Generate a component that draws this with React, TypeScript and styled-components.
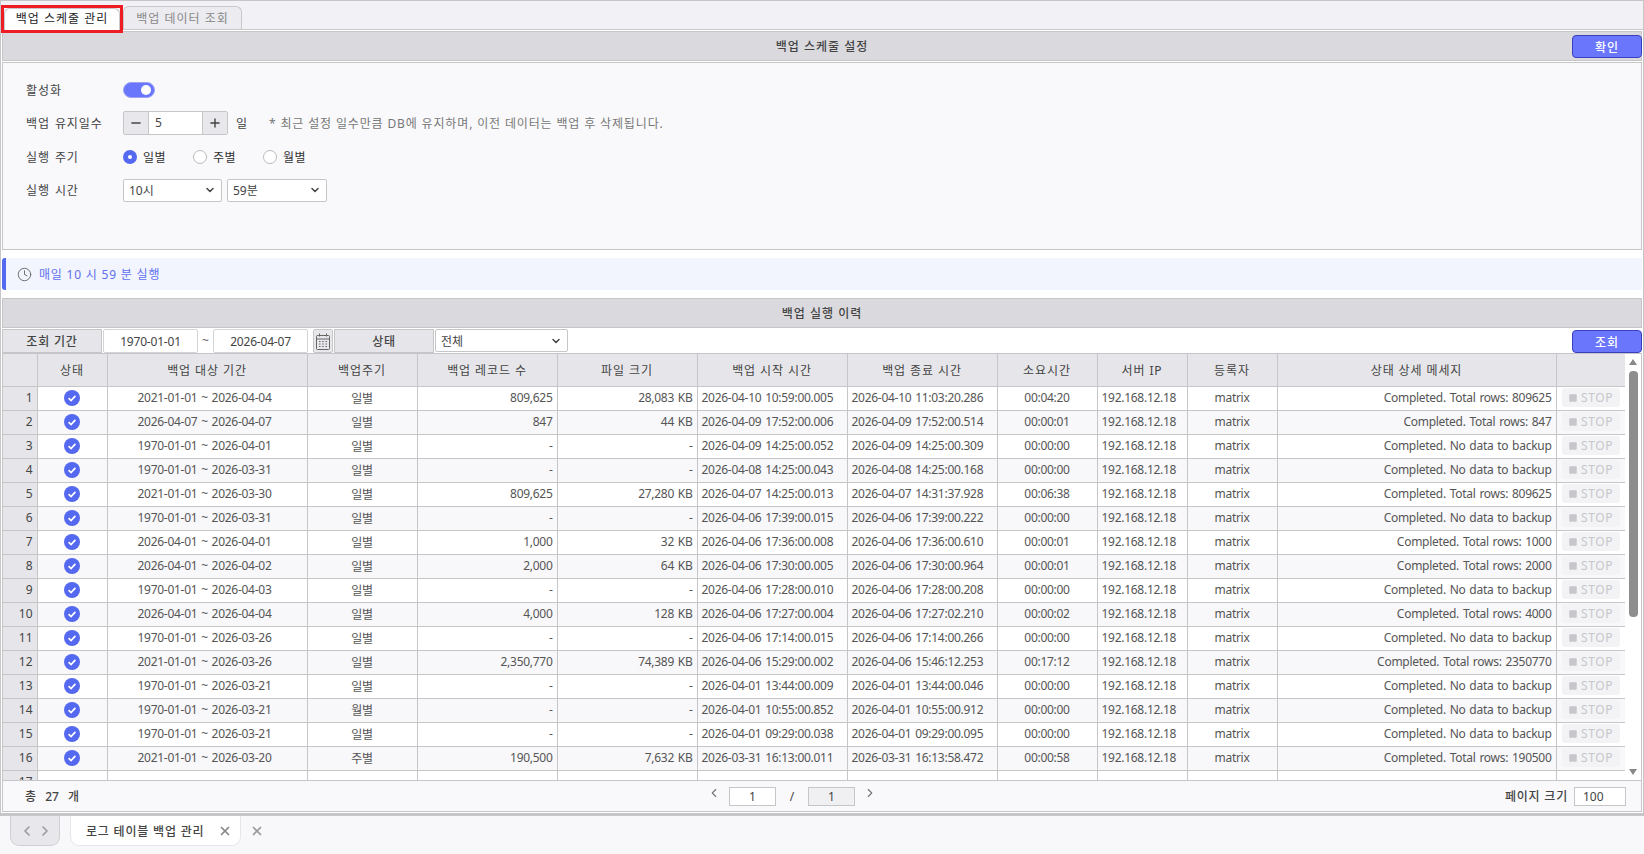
import styled, { createGlobalStyle } from 'styled-components';
import { ChevronDown, ChevronLeft, ChevronRight, X, Minus, Plus, Clock, Square } from 'lucide-react';

const GlobalStyle = createGlobalStyle`
  html, body {
    margin: 0;
    padding: 0;
    background: #f8f8fa;
    font-family: "Noto Sans", "Noto Sans CJK KR", sans-serif;
    font-size: 12px;
    color: #444;
    overflow: hidden;
  }
  *, *::before, *::after {
    box-sizing: border-box;
  }
`;

type Row = {
  range: string;
  cycle: string;
  records: string;
  size: string;
  start: string;
  end: string;
  elapsed: string;
  message: string;
};

const NO_DATA = 'Completed. No data to backup';
const total = (n: number) => `Completed. Total rows: ${n}`;

const rows: Row[] = [
  { range: '2021-01-01 ~ 2026-04-04', cycle: '일별', records: '809,625', size: '28,083 KB', start: '2026-04-10 10:59:00.005', end: '2026-04-10 11:03:20.286', elapsed: '00:04:20', message: total(809625) },
  { range: '2026-04-07 ~ 2026-04-07', cycle: '일별', records: '847', size: '44 KB', start: '2026-04-09 17:52:00.006', end: '2026-04-09 17:52:00.514', elapsed: '00:00:01', message: total(847) },
  { range: '1970-01-01 ~ 2026-04-01', cycle: '일별', records: '-', size: '-', start: '2026-04-09 14:25:00.052', end: '2026-04-09 14:25:00.309', elapsed: '00:00:00', message: NO_DATA },
  { range: '1970-01-01 ~ 2026-03-31', cycle: '일별', records: '-', size: '-', start: '2026-04-08 14:25:00.043', end: '2026-04-08 14:25:00.168', elapsed: '00:00:00', message: NO_DATA },
  { range: '2021-01-01 ~ 2026-03-30', cycle: '일별', records: '809,625', size: '27,280 KB', start: '2026-04-07 14:25:00.013', end: '2026-04-07 14:31:37.928', elapsed: '00:06:38', message: total(809625) },
  { range: '1970-01-01 ~ 2026-03-31', cycle: '일별', records: '-', size: '-', start: '2026-04-06 17:39:00.015', end: '2026-04-06 17:39:00.222', elapsed: '00:00:00', message: NO_DATA },
  { range: '2026-04-01 ~ 2026-04-01', cycle: '일별', records: '1,000', size: '32 KB', start: '2026-04-06 17:36:00.008', end: '2026-04-06 17:36:00.610', elapsed: '00:00:01', message: total(1000) },
  { range: '2026-04-01 ~ 2026-04-02', cycle: '일별', records: '2,000', size: '64 KB', start: '2026-04-06 17:30:00.005', end: '2026-04-06 17:30:00.964', elapsed: '00:00:01', message: total(2000) },
  { range: '1970-01-01 ~ 2026-04-03', cycle: '일별', records: '-', size: '-', start: '2026-04-06 17:28:00.010', end: '2026-04-06 17:28:00.208', elapsed: '00:00:00', message: NO_DATA },
  { range: '2026-04-01 ~ 2026-04-04', cycle: '일별', records: '4,000', size: '128 KB', start: '2026-04-06 17:27:00.004', end: '2026-04-06 17:27:02.210', elapsed: '00:00:02', message: total(4000) },
  { range: '1970-01-01 ~ 2026-03-26', cycle: '일별', records: '-', size: '-', start: '2026-04-06 17:14:00.015', end: '2026-04-06 17:14:00.266', elapsed: '00:00:00', message: NO_DATA },
  { range: '2021-01-01 ~ 2026-03-26', cycle: '일별', records: '2,350,770', size: '74,389 KB', start: '2026-04-06 15:29:00.002', end: '2026-04-06 15:46:12.253', elapsed: '00:17:12', message: total(2350770) },
  { range: '1970-01-01 ~ 2026-03-21', cycle: '일별', records: '-', size: '-', start: '2026-04-01 13:44:00.009', end: '2026-04-01 13:44:00.046', elapsed: '00:00:00', message: NO_DATA },
  { range: '1970-01-01 ~ 2026-03-21', cycle: '월별', records: '-', size: '-', start: '2026-04-01 10:55:00.852', end: '2026-04-01 10:55:00.912', elapsed: '00:00:00', message: NO_DATA },
  { range: '1970-01-01 ~ 2026-03-21', cycle: '일별', records: '-', size: '-', start: '2026-04-01 09:29:00.038', end: '2026-04-01 09:29:00.095', elapsed: '00:00:00', message: NO_DATA },
  { range: '2021-01-01 ~ 2026-03-20', cycle: '주별', records: '190,500', size: '7,632 KB', start: '2026-03-31 16:13:00.011', end: '2026-03-31 16:13:58.472', elapsed: '00:00:58', message: total(190500) },
];

const columns = [
  { title: '', width: 34 },
  { title: '상태', width: 70 },
  { title: '백업 대상 기간', width: 200 },
  { title: '백업주기', width: 110 },
  { title: '백업 레코드 수', width: 140 },
  { title: '파일 크기', width: 140 },
  { title: '백업 시작 시간', width: 150 },
  { title: '백업 종료 시간', width: 150 },
  { title: '소요시간', width: 100 },
  { title: '서버 IP', width: 90 },
  { title: '등록자', width: 90 },
  { title: '상태 상세 메세지', width: 279 },
  { title: '', width: 69 },
];

function CheckBadge() {
  return (
    <svg width="16" height="16" viewBox="0 0 16 16">
      <circle cx="8" cy="8" r="8" fill="#5468f0" />
      <path d="M4.6 8.2 7 10.5 11.4 5.8" fill="none" stroke="#fff" strokeWidth="1.7" />
    </svg>
  );
}

function CalendarIcon() {
  return (
    <svg width="14" height="17" viewBox="0 0 14 17" fill="none" stroke="#666">
      <rect x="0.5" y="2.5" width="13" height="14" rx="1" />
      <path d="M0.5 6h13M3.5 0.5v3M10.5 0.5v3" />
      <path d="M3 8.5h1.5M6.2 8.5h1.5M9.5 8.5h1.5M3 11h1.5M6.2 11h1.5M9.5 11h1.5M3 13.5h1.5M6.2 13.5h1.5M9.5 13.5h1.5" />
    </svg>
  );
}

export default function App() {
  return (
    <Page>
      <GlobalStyle />
      <Frame>
        <TabStrip>
          <TopTab $active>백업 스케줄 관리</TopTab>
          <TopTab>백업 데이터 조회</TopTab>
        </TabStrip>

        <SectionBar>
          백업 스케줄 설정
          <BarButton>확인</BarButton>
        </SectionBar>

        <SettingsPanel>
          <FormRow>
            <FormLabel>활성화</FormLabel>
            <Toggle />
          </FormRow>
          <FormRow>
            <FormLabel>백업 유지일수</FormLabel>
            <Stepper>
              <StepButton><Minus size={14} strokeWidth={2.4} /></StepButton>
              <StepValue>5</StepValue>
              <StepButton><Plus size={14} strokeWidth={2.4} /></StepButton>
            </Stepper>
            <Unit>일</Unit>
            <Hint>* 최근 설정 일수만큼 DB에 유지하며, 이전 데이터는 백업 후 삭제됩니다.</Hint>
          </FormRow>
          <FormRow>
            <FormLabel>실행 주기</FormLabel>
            <RadioItem $checked>일별</RadioItem>
            <RadioItem>주별</RadioItem>
            <RadioItem>월별</RadioItem>
          </FormRow>
          <FormRow>
            <FormLabel>실행 시간</FormLabel>
            <SelectBox $width={99}>10시<ChevronDown size={12} strokeWidth={3} /></SelectBox>
            <SelectBox $width={100}>59분<ChevronDown size={12} strokeWidth={3} /></SelectBox>
          </FormRow>
        </SettingsPanel>

        <InfoBar>
          <Clock size={15} color="#666" strokeWidth={1.5} />
          매일 10 시 59 분 실행
        </InfoBar>

        <SectionBar>백업 실행 이력</SectionBar>

        <Toolbar>
          <ToolLabel $width={100}>조회 기간</ToolLabel>
          <DateField>1970-01-01</DateField>
          <Tilde>~</Tilde>
          <DateField>2026-04-07</DateField>
          <CalendarButton><CalendarIcon /></CalendarButton>
          <ToolLabel $width={100}>상태</ToolLabel>
          <SelectBox $width={133}>전체<ChevronDown size={12} strokeWidth={3} /></SelectBox>
          <SearchButton>조회</SearchButton>
        </Toolbar>

        <TableArea>
          <TableClip>
            <HistoryTable>
              <colgroup>
                {columns.map((c, i) => (
                  <col key={i} style={{ width: c.width }} />
                ))}
              </colgroup>
              <thead>
                <tr>
                  {columns.map((c, i) => (
                    <Th key={i}>{c.title}</Th>
                  ))}
                </tr>
              </thead>
              <tbody>
                {rows.map((r, i) => {
                  const even = i % 2 === 1;
                  return (
                    <tr key={i}>
                      <NumCell>{i + 1}</NumCell>
                      <Td $even={even}><BadgeWrap><CheckBadge /></BadgeWrap></Td>
                      <RangeCell $even={even}>{r.range}</RangeCell>
                      <Td $even={even}>{r.cycle}</Td>
                      <Td $even={even} $align="right">{r.records}</Td>
                      <Td $even={even} $align="right">{r.size}</Td>
                      <Td $even={even} $align="left">{r.start}</Td>
                      <Td $even={even} $align="left">{r.end}</Td>
                      <Td $even={even}>{r.elapsed}</Td>
                      <Td $even={even} $align="left">192.168.12.18</Td>
                      <Td $even={even}>matrix</Td>
                      <Td $even={even} $align="right">{r.message}</Td>
                      <Td $even={even}>
                        <StopButton><Square size={10} fill="#c6c6cb" stroke="none" />STOP</StopButton>
                      </Td>
                    </tr>
                  );
                })}
                <tr>
                  <NumCell>17</NumCell>
                  {columns.slice(1).map((_, i) => (
                    <Td key={i} />
                  ))}
                </tr>
              </tbody>
            </HistoryTable>
          </TableClip>
          <ScrollTrack>
            <ScrollArrow />
            <ScrollThumb />
            <ScrollArrow $down />
          </ScrollTrack>
        </TableArea>

        <Pager>
          <TotalCount>총 <b>27</b> 개</TotalCount>
          <PagerCenter>
            <PagerArrow><ChevronLeft size={14} /></PagerArrow>
            <PageBox>1</PageBox>
            <Slash>/</Slash>
            <PageBox $muted>1</PageBox>
            <PagerArrow><ChevronRight size={14} /></PagerArrow>
          </PagerCenter>
          <PageSize>
            페이지 크기
            <PageSizeBox>100</PageSizeBox>
          </PageSize>
        </Pager>
      </Frame>

      <BottomTabs>
        <NavPill>
          <ChevronLeft size={16} strokeWidth={2.4} />
          <ChevronRight size={16} strokeWidth={2.4} />
        </NavPill>
        <OpenTab>
          로그 테이블 백업 관리
          <X size={14} color="#888" strokeWidth={3} />
        </OpenTab>
        <CloseAll><X size={14} color="#999" strokeWidth={3} /></CloseAll>
      </BottomTabs>
    </Page>
  );
}

const Page = styled.div`
  width: 1644px;
  height: 854px;
  display: flex;
  flex-direction: column;
  overflow: hidden;
`;

const Frame = styled.div`
  height: 816px;
  display: flex;
  flex-direction: column;
  background: #fff;
  border: 1px solid #c6c6c8;
  border-bottom-width: 3px;
  padding: 0 1px 1px;
`;

const TabStrip = styled.div`
  height: 29px;
  flex: none;
  display: flex;
  align-items: flex-end;
  background: #f2f2f6;
  border-bottom: 1px solid #c8c8ca;
  margin: 0 -1px 1px;
`;

const TopTab = styled.div<{ $active?: boolean }>`
  height: ${(p) => (p.$active ? '28px' : '23px')};
  width: ${(p) => (p.$active ? '122px' : '119px')};
  margin-bottom: ${(p) => (p.$active ? '-4px' : '0')};
  padding-bottom: ${(p) => (p.$active ? '2px' : '0')};
  position: relative;
  z-index: 1;
  display: flex;
  align-items: center;
  justify-content: center;
  white-space: nowrap;
  letter-spacing: 1px;
  color: ${(p) => (p.$active ? '#222' : '#888')};
  background: ${(p) => (p.$active ? '#f2f2f6' : '#ececf0')};
  border: ${(p) => (p.$active ? '3px solid #ee1c25' : '1px solid #c8c8ca')};
  border-radius: ${(p) => (p.$active ? '0' : '6px 6px 0 0')};
  border-bottom-width: ${(p) => (p.$active ? '3px' : '0')};
  &::before {
    content: '';
    display: ${(p) => (p.$active ? 'block' : 'none')};
    position: absolute;
    inset: 0;
    z-index: -1;
    background: #fff;
    border: 1px solid #c8c8ca;
    border-bottom: 0;
    border-radius: 6px 6px 0 0;
  }
`;

const SectionBar = styled.div`
  height: 30px;
  flex: none;
  position: relative;
  display: flex;
  align-items: center;
  justify-content: center;
  background: #dadade;
  border: 1px solid #c6c6c8;
  font-weight: 500;
  color: #444;
  letter-spacing: 1px;
`;

const BarButton = styled.button`
  position: absolute;
  right: -1px;
  top: 3px;
  width: 70px;
  height: 23px;
  padding: 0;
  font: inherit;
  font-weight: 500;
  letter-spacing: 1px;
  color: #fff;
  background: #6a76fb;
  border: 1px solid #3a3fc0;
  border-radius: 4px;
`;

const SettingsPanel = styled.div`
  height: 188px;
  flex: none;
  margin-top: 1px;
  background: #f9f9fb;
  border: 1px solid #c6c6c8;
  padding: 10px 23px 0;
  display: flex;
  flex-direction: column;
`;

const FormRow = styled.div`
  height: 33.5px;
  display: flex;
  align-items: center;
`;

const FormLabel = styled.div`
  width: 97px;
  flex: none;
  color: #444;
  letter-spacing: 0.9px;
  word-spacing: 1px;
`;

const Toggle = styled.div`
  width: 32px;
  height: 16px;
  border-radius: 8px;
  background: #6a76fb;
  border: 1px solid #9ca3f5;
  position: relative;
  &::after {
    content: '';
    position: absolute;
    right: 3px;
    top: 2px;
    width: 10px;
    height: 10px;
    border-radius: 50%;
    background: #fff;
  }
`;

const Stepper = styled.div`
  width: 105px;
  height: 24px;
  display: flex;
  border: 1px solid #c6c6c8;
  border-radius: 2px;
  background: #fff;
  margin-right: 8px;
`;

const StepButton = styled.div`
  width: 24px;
  flex: none;
  display: flex;
  align-items: center;
  justify-content: center;
  background: #e8e8ec;
  color: #444;
`;

const StepValue = styled.div`
  flex: 1;
  padding-left: 6px;
  line-height: 22px;
  border-left: 1px solid #c6c6c8;
  border-right: 1px solid #c6c6c8;
`;

const Unit = styled.span`
  width: 33px;
  color: #444;
`;

const Hint = styled.span`
  color: #777;
  letter-spacing: 0.85px;
`;

const RadioItem = styled.label<{ $checked?: boolean }>`
  width: 70px;
  display: flex;
  align-items: center;
  gap: 6px;
  color: #333;
  letter-spacing: 0.5px;
  &::before {
    content: '';
    width: 14px;
    height: 14px;
    flex: none;
    border-radius: 50%;
    background: #fff;
    border: ${(p) => (p.$checked ? '5px solid #5468f0' : '1px solid #bbb')};
  }
`;

const SelectBox = styled.div<{ $width: number }>`
  width: ${(p) => p.$width}px;
  height: 23px;
  margin-right: 5px;
  flex: none;
  display: flex;
  align-items: center;
  justify-content: space-between;
  padding: 0 5px;
  color: #444;
  background: #fff;
  border: 1px solid #c6c6c8;
  border-radius: 2px;
`;

const InfoBar = styled.div`
  height: 32px;
  flex: none;
  margin: 8px 0;
  display: flex;
  align-items: center;
  gap: 7px;
  padding-left: 11px;
  background: #f2f5fe;
  border-left: 4px solid #5468f0;
  border-radius: 3px 0 0 3px;
  color: #5f6ff0;
  letter-spacing: 0.8px;
`;

const Toolbar = styled.div`
  height: 24px;
  flex: none;
  margin-top: 1px;
  position: relative;
  display: flex;
  align-items: stretch;
  gap: 1px;
`;

const ToolLabel = styled.div<{ $width: number }>`
  width: ${(p) => p.$width}px;
  flex: none;
  display: flex;
  align-items: center;
  justify-content: center;
  background: #e6e6ea;
  border: 1px solid #c6c6c8;
  font-weight: 500;
  letter-spacing: 0.8px;
  color: #444;
`;

const DateField = styled.div`
  width: 95px;
  flex: none;
  display: flex;
  align-items: center;
  justify-content: center;
  border: 1px solid #d4d4d6;
  border-radius: 2px;
  color: #444;
  letter-spacing: -0.2px;
`;

const Tilde = styled.span`
  width: 13px;
  flex: none;
  text-align: center;
  line-height: 24px;
  color: #666;
`;

const CalendarButton = styled.div`
  width: 20px;
  flex: none;
  margin-left: 4px;
  display: flex;
  align-items: center;
  justify-content: center;
  background: #e8e8ec;
  border: 1px solid #c6c6c8;
  border-radius: 2px;
`;

const SearchButton = styled(BarButton)`
  top: 1px;
  right: 0;
`;

const TableArea = styled.div`
  height: 428px;
  flex: none;
  position: relative;
  display: flex;
  border: 1px solid #c6c6c8;
`;

const TableClip = styled.div`
  flex: 1;
  overflow: hidden;
`;

const HistoryTable = styled.table`
  table-layout: fixed;
  border-collapse: collapse;
  width: 1622px;
`;

const Th = styled.th`
  height: 32px;
  padding: 0;
  font-weight: 400;
  background: #e6e6ea;
  border: 1px solid #c6c6c8;
  border-top: 0;
  color: #444;
  letter-spacing: 0.9px;
  &:first-child {
    border-left: 0;
  }
`;

const Td = styled.td<{ $even?: boolean; $align?: 'left' | 'right' }>`
  height: 24px;
  padding: 0 4px 1px;
  white-space: nowrap;
  overflow: hidden;
  text-align: ${(p) => p.$align ?? 'center'};
  background: ${(p) => (p.$even ? '#f8f8fb' : '#fff')};
  border: 1px solid #c6c6c8;
  color: #555;
  letter-spacing: -0.28px;
  word-spacing: 1px;
`;

const RangeCell = styled(Td)`
  padding-right: 9px;
`;

const NumCell = styled.td`
  height: 24px;
  padding: 0 4px 1px 0;
  text-align: right;
  background: #e6e6ea;
  border: 1px solid #c6c6c8;
  border-left: 0;
  color: #444;
`;

const BadgeWrap = styled.span`
  display: flex;
  justify-content: center;
`;

const StopButton = styled.div`
  width: 58px;
  height: 19px;
  margin: 0 auto;
  display: flex;
  align-items: center;
  justify-content: center;
  gap: 3px;
  background: #f3f3f6;
  border-radius: 3px;
  color: #c6c6cb;
  letter-spacing: 0.6px;
`;

const ScrollTrack = styled.div`
  width: 16px;
  flex: none;
  display: flex;
  flex-direction: column;
  align-items: center;
  background: #fff;
  padding: 5px 0;
`;

const ScrollArrow = styled.div<{ $down?: boolean }>`
  width: 0;
  height: 0;
  flex: none;
  border-left: 4px solid transparent;
  border-right: 4px solid transparent;
  border-bottom: ${(p) => (p.$down ? '0' : '6px solid #888')};
  border-top: ${(p) => (p.$down ? '6px solid #888' : '0')};
`;

const ScrollThumb = styled.div`
  width: 9px;
  height: 246px;
  margin: 6px 0 auto;
  background: #8e8e8e;
  border-radius: 4px;
`;

const Pager = styled.div`
  flex: 1;
  display: grid;
  grid-template-columns: 682px auto 1fr;
  align-items: center;
  background: #f9f9fb;
  border: 1px solid #c6c6c8;
  border-top: 0;
  padding: 0 15px 0 22px;
`;

const TotalCount = styled.div`
  font-weight: 500;
  color: #444;
  word-spacing: 6px;
  b {
    font-weight: 500;
  }
`;

const PagerCenter = styled.div`
  display: flex;
  align-items: center;
`;

const PagerArrow = styled.span`
  display: flex;
  color: #777;
  margin: -6px 8px 0;
  &:first-child {
    margin-left: 0;
  }
`;

const PageBox = styled.div<{ $muted?: boolean }>`
  width: 47px;
  height: 19px;
  line-height: 17px;
  text-align: center;
  background: ${(p) => (p.$muted ? '#f0f0f2' : '#fff')};
  border: 1px solid #c6c6c8;
  color: #444;
`;

const Slash = styled.span`
  width: 32px;
  text-align: center;
  color: #444;
`;

const PageSize = styled.div`
  justify-self: end;
  display: flex;
  align-items: center;
  gap: 6px;
  font-weight: 500;
  letter-spacing: 0.8px;
  color: #444;
`;

const PageSizeBox = styled.div`
  width: 52px;
  height: 19px;
  line-height: 17px;
  padding-left: 8px;
  font-weight: 400;
  letter-spacing: 0;
  background: #fff;
  border: 1px solid #c6c6c8;
`;

const BottomTabs = styled.div`
  flex: 1;
  display: flex;
  align-items: flex-start;
  padding-left: 10px;
`;

const NavPill = styled.div`
  width: 50px;
  height: 30px;
  display: flex;
  align-items: center;
  justify-content: center;
  gap: 2px;
  padding-left: 2px;
  color: #999;
  background: #e8e8ec;
  border: 1px solid #d0d0d4;
  border-top: 0;
  border-radius: 0 0 9px 9px;
`;

const OpenTab = styled.div`
  width: 171px;
  height: 30px;
  margin-left: 10px;
  display: flex;
  align-items: center;
  justify-content: space-between;
  padding: 0 8px 0 15px;
  font-weight: 500;
  letter-spacing: 0.8px;
  color: #444;
  background: #fff;
  border: 1px solid #e6e6ea;
  border-top: 0;
  border-radius: 0 0 9px 9px;
`;

const CloseAll = styled.div`
  height: 30px;
  margin-left: 9px;
  display: flex;
  align-items: center;
`;
